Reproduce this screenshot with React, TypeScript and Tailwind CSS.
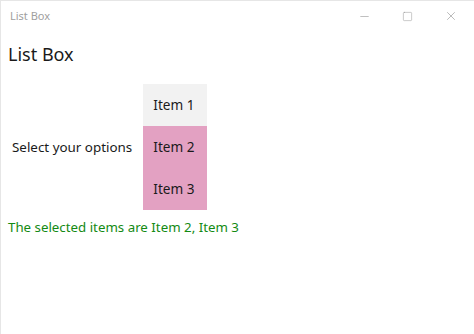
import { Minus, Square, X } from 'lucide-react';

const ITEMS = [
  { label: 'Item 1', selected: false },
  { label: 'Item 2', selected: true },
  { label: 'Item 3', selected: true },
];

export default function App() {
  const chosen = ITEMS.filter(i => i.selected).map(i => i.label).join(', ');
  return (
    <div
      className="flex h-[334px] w-[474px] flex-col overflow-hidden border-l border-t border-[#e6e6e6] bg-white"
      style={{ fontFamily: '"Noto Sans", "Open Sans", sans-serif' }}
    >
      <div className="flex h-[30px] shrink-0 items-center justify-between">
        <span className="pl-[9px] text-[11px] text-[#a0a0a0]">List Box</span>
        <div className="flex h-full items-center text-[#8a8a8a]">
          <span className="flex w-[44px] justify-center">
            <Minus size={13} strokeWidth={1} />
          </span>
          <span className="flex w-[42px] justify-center">
            <Square size={11} strokeWidth={1} />
          </span>
          <span className="flex w-[46px] justify-center">
            <X size={14} strokeWidth={1} />
          </span>
        </div>
      </div>

      <h1 className="mt-[10px] pl-[7px] text-[18px] leading-[26px] text-[#1a1a1a]">List Box</h1>

      <div className="mt-[17px] flex items-center">
        <span className="pl-[11px] pr-[11px] text-[13.4px] text-[#1a1a1a]">Select your options</span>
        <div className="flex w-[64px] flex-col">
          {ITEMS.map(item => (
            <div
              key={item.label}
              className={`flex h-[42px] items-center pl-[10px] text-[13.6px] text-[#1a1a1a] ${
                item.selected ? 'bg-[#e3a1c2]' : 'bg-[#f2f2f2]'
              }`}
            >
              {item.label}
            </div>
          ))}
        </div>
      </div>

      <p className="mt-[8px] pl-[7px] text-[13.3px] text-[#138a13]">The selected items are {chosen}</p>
    </div>
  );
}
